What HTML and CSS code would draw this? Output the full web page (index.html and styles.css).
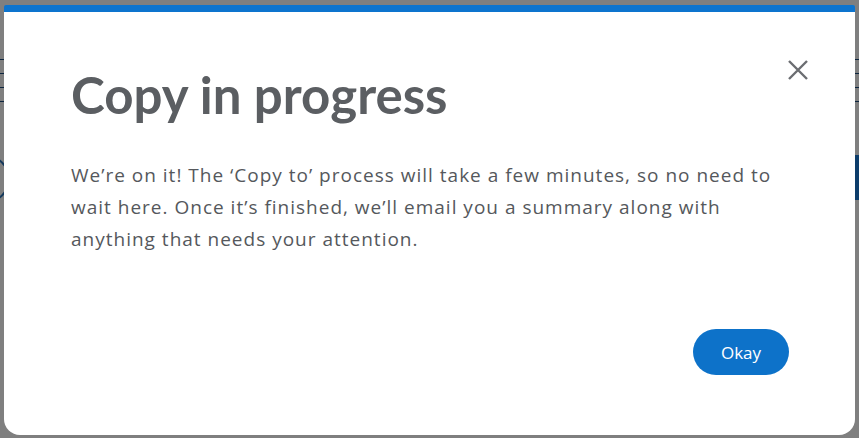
FILE: index.html
```html
<!DOCTYPE html>
<html lang="en">
<head>
  <meta charset="UTF-8">
  <title>Copy in progress</title>
  <link rel="stylesheet" href="styles.css">
</head>
<body>
  <div class="page">
    <div class="page-header">
      <div class="rule"></div>
      <div class="rule"></div>
      <div class="rule"></div>
      <div class="rule"></div>
    </div>
    <div class="toolbar">
      <span class="round-btn"></span>
      <span class="primary-btn"></span>
    </div>
  </div>

  <div class="overlay">
    <div class="modal">
      <button class="close" aria-label="Close">
        <svg width="22" height="22" viewBox="0 0 22 22">
          <path d="M2 2 L20 20 M20 2 L2 20" stroke="#6b6d71" stroke-width="2.4" fill="none"/>
        </svg>
      </button>
      <h1>Copy in progress</h1>
      <p class="message">We’re on it! The ‘Copy to’ process will take a few minutes, so no need to wait here. Once it’s finished, we’ll email you a summary along with anything that needs your attention.</p>
      <div class="actions">
        <button class="okay">Okay</button>
      </div>
    </div>
  </div>
</body>
</html>
```

FILE: styles.css
```css
html, body {
  margin: 0;
  padding: 0;
  height: 100%;
}

body {
  font-family: "Open Sans", Lato, sans-serif;
  background-color: #ffffff;
  overflow: hidden;
}

/* page behind the dialog */
.page {
  height: 100%;
  padding-top: 59px;
  box-sizing: border-box;
  overflow: hidden;
}

.page-header {
  display: flex;
  flex-direction: column;
  gap: 13px;
}

.rule {
  height: 1px;
  background-color: #1b4d80;
}

.toolbar {
  display: flex;
  justify-content: space-between;
  margin-top: 53px;
}

.round-btn {
  width: 44px;
  height: 44px;
  margin-left: -38px;
  border: 2px solid #2a73b8;
  border-radius: 50%;
}

.primary-btn {
  width: 10px;
  height: 45px;
  background-color: #1a7ad6;
}

/* dialog */
.overlay {
  position: fixed;
  inset: 0;
  box-sizing: border-box;
  padding: 5px 4px 3px 4px;
  background-color: rgba(0, 0, 0, 0.5);
}

.modal {
  position: relative;
  height: 100%;
  box-sizing: border-box;
  background: #ffffff;
  border-top: 7px solid #0d74ce;
  border-radius: 2px 2px 16px 16px;
  padding: 54px 67px 0 67px;
  display: flex;
  flex-direction: column;
}

h1 {
  margin: 0;
  font-family: Lato, sans-serif;
  font-size: 51px;
  font-weight: 700;
  color: #5b5e62;
  line-height: 58px;
}

.message {
  margin: 35px 0 0 0;
  font-size: 19px;
  line-height: 32px;
  letter-spacing: 1px;
  color: #55585c;
}

.close {
  position: absolute;
  top: 47px;
  right: 46px;
  padding: 0;
  border: none;
  background: none;
  cursor: pointer;
}

.actions {
  display: flex;
  justify-content: flex-end;
  margin-top: 74px;
  margin-right: -1px;
}

.okay {
  width: 96px;
  height: 46px;
  border: none;
  border-radius: 23px;
  background-color: #0d72c9;
  color: #ffffff;
  font-family: "Open Sans", sans-serif;
  font-size: 17px;
  cursor: pointer;
}
```
